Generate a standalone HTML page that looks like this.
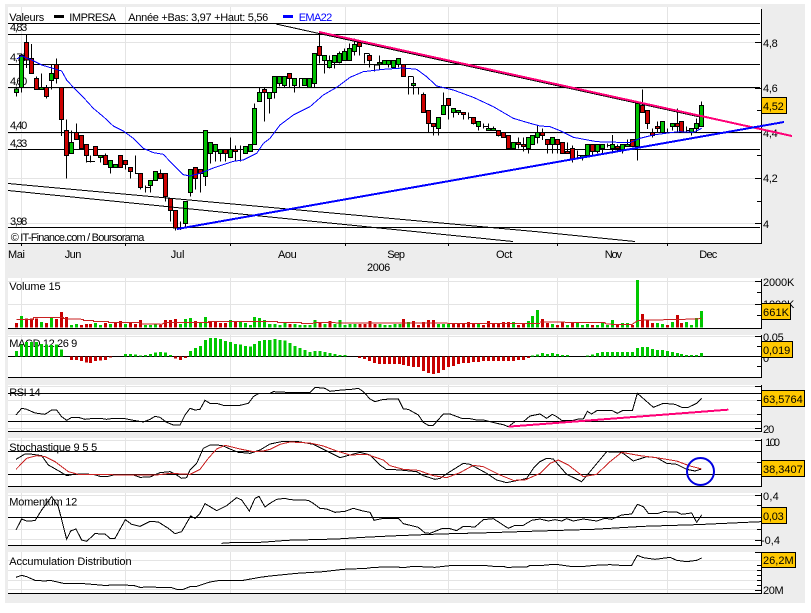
<!DOCTYPE html>
<html><head><meta charset="utf-8"><title>IMPRESA</title>
<style>
html,body{margin:0;padding:0;background:#fff;width:811px;height:613px;overflow:hidden}
svg{display:block;position:absolute;left:0;top:0}
text{font-family:"Liberation Sans",sans-serif;font-size:11px;fill:#000}
.c *{shape-rendering:crispEdges}
.l{fill:none;stroke:#000;stroke-width:3;shape-rendering:crispEdges}
.r{fill:none;stroke:#c82020;stroke-width:3;shape-rendering:crispEdges}
.g{stroke:#00c800;stroke-width:9;fill:none;shape-rendering:crispEdges}
.d{stroke:#c80000;stroke-width:9;fill:none;shape-rendering:crispEdges}
</style></head><body>
<svg width="811" height="613" viewBox="0 0 811 613">
<rect x="5" y="4" width="800" height="599" fill="#ededed"/>
<g fill="#fff">
<rect x="8" y="7" width="753" height="236"/>
<rect x="8" y="278" width="753" height="50"/>
<rect x="8" y="335" width="753" height="42"/>
<rect x="8" y="385" width="753" height="46"/>
<rect x="8" y="438" width="753" height="48"/>
<rect x="8" y="493" width="753" height="52"/>
<rect x="8" y="552" width="753" height="41"/>
</g>
<!-- light grid -->
<path class="c" stroke="#e4e4e4" fill="none" shape-rendering="crispEdges" d="M21.5 7V243M125.5 7V243M230.5 7V243M345.5 7V243M448.5 7V243M557.5 7V243M667.5 7V243
M21.5 278V328M125.5 278V328M230.5 278V328M345.5 278V328M448.5 278V328M557.5 278V328M667.5 278V328
M21.5 335V377M125.5 335V377M230.5 335V377M345.5 335V377M448.5 335V377M557.5 335V377M667.5 335V377
M21.5 385V431M125.5 385V431M230.5 385V431M345.5 385V431M448.5 385V431M557.5 385V431M667.5 385V431
M21.5 438V486M125.5 438V486M230.5 438V486M345.5 438V486M448.5 438V486M557.5 438V486M667.5 438V486
M21.5 493V545M125.5 493V545M230.5 493V545M345.5 493V545M448.5 493V545M557.5 493V545M667.5 493V545
M21.5 552V593M125.5 552V593M230.5 552V593M345.5 552V593M448.5 552V593M557.5 552V593M667.5 552V593
M8 42.5H761M8 88.5H761M8 133.5H761M8 178.5H761M8 223.5H761
M8 281.5H761M8 304.5H761
M8 336.5H761
M8 400.5H761M8 414.5H761M8 428.5H761M8 386.5H761
M8 440.5H761M8 462.5H761
M8 505.5H761M8 529.5H761M8 539.5H761M8 495.5H761
M8 560.5H761M8 570.5H761M8 580.5H761M8 589.5H761"/>
<!-- black grid and axes -->
<path fill="none" stroke="#000" shape-rendering="crispEdges" d="M8 23.5H760M8 34.5H760M8 64.5H760M8 87.5H760M8 132.5H760M8 149.5H760M8 227.5H760M8 243.5H761
M8 328.5H761M8 356.5H761M8 377.5H761M8 393.5H761M8 421.5H761M8 431.5H761M8 451.5H761M8 474.5H761M8 486.5H761M8 517.5H761M8 545.5H761M8 593.5H761
M761.5 9V244M761.5 279V329M761.5 335V378M761.5 385V432M761.5 439V487M761.5 493V546M761.5 552V594
M21.5 243V246M125.5 243V246M230.5 243V246M345.5 243V246M448.5 243V246M557.5 243V246M667.5 243V246
M755 42.5H761M757 110.5H761M755 178.5H761M757 201.5H761M755 223.5H761M755 88.5H761M757 155.5H761M755 132.5H761
M755 281.5H761M757 292.5H761M755 304.5H761M757 315.5H761
M755 336.5H761M757 346.5H761M755 356.5H761M757 366.5H761
M755 386.5H761M757 400.5H761M757 414.5H761M755 428.5H761
M755 440.5H761M757 462.5H761M755 474.5H761
M755 495.5H761M757 505.5H761M757 517.5H761M757 529.5H761M755 540.5H761
M755 552.5H761M757 565.5H761M757 570.5H761M757 575.5H761M757 580.5H761M757 585.5H761M755 590.5H761"/>
<!-- text -->
<text x="9.3" y="21" textLength="35">Valeurs</text>
<rect x="54" y="15" width="10" height="3" fill="#000"/>
<text x="69.3" y="21" textLength="46.7">IMPRESA</text>
<text x="128.3" y="21" textLength="140">Année +Bas: 3,97 +Haut: 5,56</text>
<rect x="283" y="15" width="10" height="3" fill="#0000ff"/>
<text x="298.7" y="21" textLength="33.6" style="fill:#0000ff">EMA22</text>
<text x="10" y="31" textLength="17.3">4,83</text>
<text x="10" y="61" textLength="17.3">4,70</text>
<text x="10" y="85" textLength="17.3">4,60</text>
<text x="10" y="129" textLength="17.3">4,40</text>
<text x="10" y="147" textLength="17.3">4,33</text>
<text x="10" y="225" textLength="17.3">3,98</text>
<text x="10.7" y="241" textLength="133.7">© IT-Finance.com / Boursorama</text>
<text x="8" y="258" textLength="17">Mai</text><text x="64.7" y="258" textLength="16.7">Jun</text><text x="170.7" y="258" textLength="13.7">Jul</text><text x="278" y="258" textLength="18.7">Aou</text><text x="387.3" y="258" textLength="17.7">Sep</text><text x="496" y="258" textLength="16.3">Oct</text><text x="604.7" y="258" textLength="17.3">Nov</text><text x="699.3" y="258" textLength="18">Dec</text>
<text x="367" y="271" textLength="23.3">2006</text>
<text x="9.3" y="290" textLength="51.3">Volume 15</text>
<text x="9.3" y="347" textLength="68">MACD 12 26 9</text>
<text x="9.3" y="396" textLength="31.3">RSI 14</text>
<text x="9.3" y="451" textLength="88">Stochastique 9 5 5</text>
<text x="9.3" y="505.5" textLength="68">Momentum 12</text>
<text x="9.3" y="565" textLength="122.3">Accumulation Distribution</text>
<text x="763" y="47" textLength="14.7">4,8</text><text x="763" y="92" textLength="14.7">4,6</text><text x="763" y="137" textLength="14.7">4,4</text><text x="763" y="182" textLength="14.7">4,2</text><text x="763" y="228">4</text>
<text x="763" y="286" textLength="31.3">2000K</text><text x="763" y="308" textLength="31.3">1000K</text><text x="763" y="341" textLength="20.7">0,05</text><text x="763" y="362">0</text><text x="763" y="433" textLength="11.3">20</text><text x="765.3" y="446" textLength="14.7">100</text><text x="763" y="500" textLength="15.7">0,4</text><text x="761" y="544" textLength="19">-0,4</text><text x="763" y="594" textLength="20.7">20M</text>

<!-- candles: x real, y in 3x units -->
<g transform="scale(1 .33333)" fill="none" stroke="#000" shape-rendering="crispEdges">
<path vector-effect="non-scaling-stroke" d="M16.5 262V290M21.5 160V278M26.5 104V204M31.5 132V220M36.5 230V268M41.5 220V268M46.5 255V296M51.5 195V268M56.5 175V250M61.5 262V408M66.5 358V536M71.5 391V460M76.5 370V418M81.5 406V445M86.5 433V488M90.5 466V488M95.5 439V466M100.5 466V488M105.5 460V493M110.5 481V520M115.5 493V502M120.5 466V502M125.5 481V508M130.5 502V535M135.5 466V520M140.5 520V568M145.5 556V578M150.5 541V578M155.5 514V541M160.5 508V535M165.5 520V605M170.5 595V665M175.5 632V692M180.5 665V690M185.5 604V684M190.5 508V590M195.5 502V568M200.5 508V578M205.5 391V558M210.5 427V490M215.5 433V484M220.5 448V484M225.5 448V484M230.5 412V472M235.5 436V484M240.5 436V484M245.5 439V460M250.5 433V454M254.5 310V433M259.5 262V304M264.5 262V364M269.5 277V340M274.5 229V295M279.5 229V260M284.5 229V262M289.5 220V262M294.5 235V278M299.5 235V262M304.5 235V256M309.5 235V262M314.5 160V262M319.5 94V190M324.5 166V220M329.5 166V205M334.5 166V205M339.5 155V190M344.5 145V181M349.5 130V181M354.5 115V166M359.5 120V166M364.5 160V190M369.5 160V202M374.5 195V215M379.5 166V208M384.5 181V193M388.5 181V202M393.5 181V202M398.5 175V202M403.5 193V229M408.5 229V284M413.5 229V284M418.5 262V284M423.5 277V337M428.5 331V397M433.5 370V406M438.5 352V406M443.5 277V343M448.5 295V358M453.5 325V352M458.5 331V345M463.5 337V358M468.5 337V358M473.5 352V373M478.5 364V392M483.5 370V385M488.5 370V391M493.5 380V392M498.5 391V410M503.5 397V412M508.5 406V445M513.5 427V445M518.5 412V445M523.5 412V455M528.5 412V460M532.5 406V433M537.5 378V430M542.5 385V420M547.5 418V460M552.5 412V460M557.5 418V460M562.5 427V460M567.5 427V460M572.5 436V487M577.5 452V472M582.5 466V482M587.5 433V466M592.5 433V466M597.5 433V460M602.5 433V460M607.5 430V442M612.5 405V460M617.5 433V454M622.5 433V460M627.5 418V439M632.5 418V439M637.5 310V482M642.5 268V337M647.5 331V387M652.5 385V412M657.5 364V397M662.5 364V397M667.5 385V397M672.5 370V391M677.5 325V397M681.5 364V397M686.5 380V397M691.5 385V406M696.5 355V397M701.5 304V379"/>
<path vector-effect="non-scaling-stroke" d="M86 484h9M135 520h5M145 562h5M180 684h5M240 448h5M299 235h5M364 160h5M374 195h5M408 229h5M418 262h5M468 352h5M483 379h5M577 466h5M607 436h5M667 397h5M686 391h5"/>
<path vector-effect="non-scaling-stroke" fill="#00c000" d="M14.5 267h4V277h-4zM19.5 166h4V262h-4zM39.5 262h4V268h-4zM49.5 220h4V241h-4zM69.5 427h4V460h-4zM98.5 466h4V472h-4zM108.5 481h4V502h-4zM113.5 493h4V502h-4zM148.5 541h4V556h-4zM153.5 514h4V541h-4zM183.5 604h4V670h-4zM188.5 508h4V577h-4zM203.5 391h4V529h-4zM208.5 427h4V460h-4zM213.5 433h4V454h-4zM218.5 448h4V460h-4zM228.5 448h4V472h-4zM243.5 439h4V460h-4zM248.5 433h4V454h-4zM252.5 325h4V433h-4zM257.5 277h4V304h-4zM267.5 277h4V295h-4zM272.5 229h4V277h-4zM277.5 229h4V250h-4zM282.5 229h4V256h-4zM292.5 235h4V256h-4zM302.5 235h4V256h-4zM307.5 235h4V262h-4zM312.5 160h4V250h-4zM322.5 166h4V181h-4zM327.5 181h4V202h-4zM332.5 166h4V187h-4zM337.5 160h4V187h-4zM342.5 154h4V181h-4zM347.5 145h4V181h-4zM352.5 133h4V154h-4zM377.5 187h4V192h-4zM382.5 181h4V193h-4zM386.5 181h4V193h-4zM391.5 181h4V202h-4zM396.5 175h4V193h-4zM411.5 250h4V256h-4zM436.5 352h4V385h-4zM441.5 316h4V343h-4zM451.5 325h4V337h-4zM456.5 331h4V337h-4zM476.5 364h4V379h-4zM486.5 385h4V391h-4zM491.5 385h4V391h-4zM511.5 427h4V445h-4zM526.5 412h4V445h-4zM530.5 406h4V433h-4zM535.5 397h4V412h-4zM550.5 412h4V433h-4zM580.5 466h4V472h-4zM585.5 433h4V466h-4zM595.5 433h4V454h-4zM600.5 433h4V445h-4zM610.5 433h4V445h-4zM620.5 433h4V448h-4zM625.5 433h4V439h-4zM635.5 310h4V439h-4zM660.5 364h4V397h-4zM670.5 370h4V379h-4zM689.5 385h4V397h-4zM694.5 370h4V385h-4zM699.5 316h4V379h-4z"/>
<path vector-effect="non-scaling-stroke" fill="#cc0000" d="M24.5 127h4V180h-4zM29.5 176h4V220h-4zM34.5 235h4V268h-4zM44.5 262h4V290h-4zM54.5 194h4V235h-4zM59.5 262h4V358h-4zM64.5 391h4V466h-4zM74.5 398h4V418h-4zM79.5 406h4V445h-4zM84.5 433h4V466h-4zM93.5 439h4V466h-4zM103.5 466h4V493h-4zM118.5 466h4V502h-4zM123.5 481h4V493h-4zM128.5 502h4V515h-4zM138.5 520h4V562h-4zM158.5 520h4V535h-4zM163.5 520h4V589h-4zM168.5 595h4V632h-4zM173.5 632h4V684h-4zM193.5 502h4V535h-4zM198.5 508h4V520h-4zM223.5 448h4V460h-4zM233.5 448h4V454h-4zM262.5 268h4V277h-4zM287.5 220h4V235h-4zM317.5 139h4V166h-4zM357.5 127h4V139h-4zM367.5 166h4V181h-4zM401.5 193h4V229h-4zM421.5 283h4V337h-4zM426.5 331h4V370h-4zM431.5 370h4V380h-4zM446.5 295h4V316h-4zM461.5 337h4V343h-4zM471.5 352h4V370h-4zM496.5 391h4V406h-4zM501.5 397h4V412h-4zM506.5 406h4V445h-4zM516.5 427h4V433h-4zM521.5 433h4V439h-4zM540.5 397h4V406h-4zM545.5 418h4V433h-4zM555.5 418h4V433h-4zM560.5 427h4V460h-4zM565.5 454h4V460h-4zM570.5 445h4V478h-4zM590.5 433h4V454h-4zM615.5 439h4V445h-4zM630.5 418h4V439h-4zM640.5 316h4V337h-4zM645.5 331h4V370h-4zM650.5 397h4V406h-4zM655.5 379h4V385h-4zM675.5 370h4V379h-4zM679.5 364h4V397h-4z"/>
</g>

<!-- main lines -->
<g shape-rendering="crispEdges" fill="none">
<path stroke="#000" d="M8 183.5L540 232L635 241.5M8 190.5L270 217L513 241.5M276 24L319 33.5L700 117"/>
<path stroke="#ff0077" stroke-width="2" d="M319 32L792 136"/>
<path stroke="#0000ff" stroke-width="2" d="M177 229L784 122"/>
<g transform="scale(.33333)" stroke="#0000ff" stroke-width="3">
<path d="M50 177L65 168L95 180L125 195L155 204L185 213L200 240L220 262L250 292L280 325L310 350L340 378L370 393L400 415L430 445L460 458L490 463L520 495L550 524L570 528L600 520L640 504L700 484L730 480L770 460L790 430L810 415L840 375L880 345L930 320L970 285L1010 262L1050 232L1090 215L1150 208L1210 204L1250 208L1280 230L1310 258L1360 270L1420 292L1480 320L1540 355L1580 367L1620 378L1650 380L1680 392L1720 412L1790 425L1890 428L1920 415L1960 405L2010 398L2040 395L2080 397L2105 385"/>
</g>
</g>

<!-- volume -->
<g transform="scale(.33333) translate(0 825)">
<path class="d" d="M50 157V144M80 157V131M95 157V131M110 157V131M140 157V144M170 157V132M185 157V111M200 157V126M245 157V150M260 157V147M272 157V147M317 157V144M347 157V141M362 157V138M392 157V141M407 157V147M422 157V135M482 157V150M497 157V135M512 157V135M527 157V132M587 157V138M632 157V141M647 157V141M662 157V144M677 157V144M707 157V141"/>
<path class="g" d="M65 157V123M125 157V141M155 157V128M215 157V150M230 157V147M287 157V144M302 157V150M332 157V147M377 157V147M437 157V150M452 157V150M467 157V147M542 157V147M557 157V132M572 157V129M602 157V144M617 157V126M692 157V135M722 157V141M737 157V144M752 157V150M764 157V126M779 157V129M794 157V135M809 157V147"/>
<path class="r" d="M50 133H100V127H190V131L250 133V136H280V139H325V143H420V147H480V150L495 143H550H625V139H810"/>
</g>
<g transform="translate(270 0) scale(.33333) translate(0 825)">
<path class="d" d="M60 157V147M150 157V141M180 157V138M270 157V147M285 157V147M300 157V138M315 157V147M400 157V132M430 157V138M445 157V150M460 157V141M475 157V135M490 157V135M550 157V147M565 157V147M580 157V147M595 157V141M610 157V147M640 157V150M655 157V138M670 157V147M685 157V147M700 157V141M715 157V141M745 157V150M760 157V147"/>
<path class="g" d="M0 157V147M15 157V147M30 157V150M45 157V144M75 157V147M90 157V150M105 157V150M120 157V150M135 157V135M165 157V147M195 157V147M210 157V135M225 157V150M240 157V147M255 157V147M330 157V147M345 157V150M360 157V150M375 157V147M390 157V147M415 157V141M505 157V147M520 157V147M535 157V147M625 157V147M730 157V141M775 157V138M787 157V123M802 157V105"/>
<path class="r" d="M0 139H22V142H95V146H125L135 143L810 146"/>
</g>
<g transform="translate(540 0) scale(.33333) translate(0 825)">
<path class="d" d="M7 157V132M22 157V144M52 157V150M67 157V141M97 157V141M157 157V150M232 157V150M277 157V150M307 157V117M322 157V135M337 157V144M382 157V150M412 157V120M424 157V144"/>
<path class="g" d="M37 157V147M82 157V150M112 157V144M127 157V150M142 157V147M172 157V150M187 157V141M202 157V150M217 157V135M247 157V144M262 157V144M292 157V15M352 157V144M367 157V147M397 157V141M439 157V141M454 157V150M469 157V129M484 157V108"/>
<path class="r" d="M0 141L195 143V146L225 149H275L295 136L470 132L485 130"/>
</g>

<!-- macd -->
<g transform="scale(.33333) translate(0 825)">
<path class="g" d="M50 244V228M65 244V208M80 244V201M95 244V201M110 244V201M125 244V207M140 244V208M155 244V210M170 244V208M185 244V224M377 244V237M392 244V237M407 244V238M422 244V241M437 244V240M452 244V237M467 244V232M482 244V231M497 244V233M512 244V240M572 244V228M587 244V219M602 244V213M617 244V195M632 244V189M647 244V189M662 244V192M677 244V198M692 244V201M707 244V207M722 244V209M737 244V213M752 244V214M764 244V207M779 244V198M794 244V195M809 244V195"/>
<path class="d" d="M215 244V255M230 244V255M245 244V258M260 244V262M272 244V264M287 244V258M302 244V256M317 244V255M332 244V248M527 244V251M542 244V255M557 244V249"/>
</g>
<g transform="translate(270 0) scale(.33333) translate(0 825)">
<path class="g" d="M0 244V195M15 244V192M30 244V195M45 244V197M60 244V204M75 244V213M90 244V219M105 244V225M120 244V231M135 244V228M150 244V228M165 244V231M180 244V234M195 244V237M210 244V240M225 244V240M787 244V241M802 244V238"/>
<path class="d" d="M268 244V249M283 244V252M298 244V258M313 244V264M328 244V267M343 244V267M358 244V267M373 244V267M388 244V267M400 244V270M415 244V273M430 244V276M445 244V276M460 244V288M475 244V294M490 244V297M505 244V294M520 244V285M535 244V276M550 244V273M565 244V267M580 244V264M595 244V264M610 244V261M625 244V261M640 244V258M655 244V258M670 244V258M685 244V258M700 244V258M715 244V258M730 244V258M745 244V255M760 244V255M775 244V249"/>
</g>
<g transform="translate(540 0) scale(.33333) translate(0 825)">
<path class="g" d="M7 244V234M22 244V237M37 244V234M52 244V237M67 244V240M82 244V240M142 244V241M157 244V238M172 244V234M187 244V231M202 244V231M217 244V231M232 244V231M247 244V231M262 244V231M277 244V231M292 244V219M307 244V216M322 244V216M337 244V222M352 244V225M367 244V225M382 244V228M397 244V231M412 244V234M424 244V237M439 244V240M454 244V240M469 244V240M484 244V234"/>
</g>

<!-- rsi -->
<g transform="scale(.33333) translate(0 825)">
<path class="l" d="M48 420L65 400L80 403L105 414L135 418L155 405L170 405L185 425L200 436L215 427L235 427L255 433L280 430L300 430L320 433L340 430L370 430L400 436L430 441L450 433L465 424L480 427L500 442L520 450L540 450L555 420L570 400L585 405L600 403L615 376L630 385L650 385L670 391L720 391L745 385L760 365L775 356L810 355L820 350L860 352L930 352L945 337L975 340L990 349L1025 345L1055 343L1075 340L1090 350L1110 372L1125 380L1150 373L1195 372L1210 402L1225 403L1255 420L1270 442L1285 451L1300 451L1330 417L1350 417L1385 430L1410 431L1430 435L1450 435L1490 445L1510 449L1525 455L1545 440L1570 440L1590 423L1620 417L1640 430L1657 418L1670 425L1685 436L1720 436L1735 432L1750 432L1762 409L1775 417L1792 406L1835 406L1852 415L1867 407L1897 407L1912 355L1960 397L1990 385L2025 388L2045 397L2065 397L2090 385L2105 370"/>
<path fill="none" stroke="#ff0077" stroke-width="6" shape-rendering="crispEdges" d="M1525 455L2185 404"/>
</g>

<!-- stochastic -->
<g transform="scale(.33333) translate(0 1305)">
<path class="l" d="M48 73L75 57L90 57L125 62L145 90L175 107L200 122L225 117L280 118L300 124L325 124L340 120L400 120L420 127L450 126L480 113L510 110L530 120L545 130L560 128L570 105L590 85L610 40L630 30L665 31L690 42L715 52L750 55L780 45L810 27L850 19L890 19L940 28L980 48L1020 68L1050 60L1080 52L1110 60L1140 90L1160 104L1185 104L1210 106L1250 110L1270 122L1305 133L1320 130L1350 110L1390 85L1410 88L1460 115L1490 135L1520 143L1560 135L1580 130L1600 100L1620 80L1640 70L1660 72L1700 118L1745 140L1770 110L1820 50L1865 52L1900 78L1940 65L1970 68L2000 85L2030 88L2060 103L2085 108L2105 102"/>
<path class="r" d="M48 103L80 70L110 62L135 65L165 80L205 110L235 118L400 120L470 120L510 115L570 118L600 103L625 70L650 42L675 31L720 42L760 50L790 48L810 43L840 28L870 21L930 24L970 33L1010 48L1050 60L1100 58L1150 75L1170 92L1210 103L1255 106L1300 122L1340 128L1380 113L1420 91L1450 95L1500 120L1540 136L1575 135L1620 115L1650 85L1675 75L1705 90L1750 125L1790 118L1830 80L1865 52L1920 62L1970 68L2030 78L2070 93L2105 102"/>
</g>
<circle cx="700.5" cy="471.5" r="13.5" fill="none" stroke="#0000e0" stroke-width="2"/>

<!-- momentum -->
<g transform="scale(.33333) translate(0 1305)">
<path class="l" d="M48 285L65 252L80 258L105 257L125 225L155 185L175 215L200 313L212 288L228 282L245 315L260 319L285 296L315 297L330 310L345 310L376 254L395 268L420 274L450 259L475 261L505 280L525 296L545 290L572 243L585 250L600 235L615 206L650 227L680 212L710 188L725 195L748 228L765 190L777 184L795 216L810 205L830 193L855 190L870 194L925 196L940 205L960 220L980 222L1005 232L1035 229L1060 220L1085 227L1110 232L1122 256L1150 250L1195 250L1210 266L1255 277L1275 294L1290 295L1325 281L1350 281L1370 287L1390 274L1425 276L1450 254L1480 251L1525 280L1545 271L1570 271L1595 256L1620 252L1645 258L1665 254L1685 258L1700 251L1720 258L1750 252L1790 258L1815 250L1835 253L1865 240L1895 237L1912 208L1930 215L1945 235L1975 235L1990 230L2030 231L2045 238L2075 234L2090 262L2105 240"/>
<path class="l" d="M665 325L705 322L780 322L810 320L860 316L1010 312L1090 307L1170 303L1320 297L1470 293L1620 288L1780 283L1930 274L2090 269L2240 262L2284 260"/>
</g>

<!-- accumulation -->
<g transform="scale(.33333) translate(0 1305)">
<path class="l" d="M48 427L65 421L80 425L105 436L135 438L150 436L190 445L240 445L300 450L320 452L330 450L400 451L420 457L460 456L480 458L515 458L530 463L550 463L570 455L590 454L630 441L660 436L730 436L780 427L810 423L840 420L890 415L970 410L1030 403L1100 400L1120 397L1190 396L1210 398L1240 394L1305 397L1350 392L1460 392L1480 394L1510 394L1520 397L1580 396L1590 391L1620 392L1650 389L1675 389L1710 394L1755 394L1785 391L1830 389L1860 391L1895 391L1912 361L1930 368L1965 373L2010 367L2030 376L2060 380L2090 376L2105 369"/>
</g>

<!-- value boxes -->
<g fill="#ffc800" stroke="#000" shape-rendering="crispEdges">
<rect x="761.5" y="97.5" width="25" height="16"/>
<rect x="761.5" y="303.5" width="29" height="16"/>
<rect x="761.5" y="341.5" width="31" height="16"/>
<rect x="761.5" y="390.5" width="43" height="16"/>
<rect x="761.5" y="460.5" width="43" height="16"/>
<rect x="761.5" y="507.5" width="25" height="16"/>
<rect x="761.5" y="552.5" width="34" height="15"/>
</g>
<text x="763" y="110" textLength="20.7">4,52</text>
<text x="763" y="316" textLength="26">661K</text>
<text x="763" y="354" textLength="27.3">0,019</text>
<text x="763" y="403" textLength="39.7">63,5764</text>
<text x="763" y="473" textLength="39.7">38,3407</text>
<text x="763" y="520" textLength="20.7">0,03</text>
<text x="763" y="564" textLength="30.7">26,2M</text>
</svg>
</body></html>
